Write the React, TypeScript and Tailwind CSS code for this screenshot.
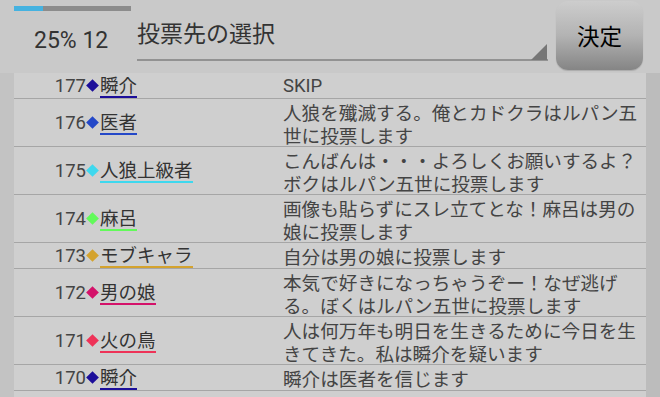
// Vote target selection screen

const rows = [
  { no: 177, name: '瞬介', color: '#1c0e9a', msg: 'SKIP' },
  { no: 176, name: '医者', color: '#2448c8', msg: '人狼を殲滅する。俺とカドクラはルパン五世に投票します' },
  { no: 175, name: '人狼上級者', color: '#3ed8ee', msg: 'こんばんは・・・よろしくお願いするよ？ボクはルパン五世に投票します' },
  { no: 174, name: '麻呂', color: '#62fa5a', msg: '画像も貼らずにスレ立てとな！麻呂は男の娘に投票します' },
  { no: 173, name: 'モブキャラ', color: '#d4a32e', msg: '自分は男の娘に投票します' },
  { no: 172, name: '男の娘', color: '#d4126a', msg: '本気で好きになっちゃうぞー！なぜ逃げる。ぼくはルパン五世に投票します' },
  { no: 171, name: '火の鳥', color: '#ee3358', msg: '人は何万年も明日を生きるために今日を生きてきた。私は瞬介を疑います' },
  { no: 170, name: '瞬介', color: '#1c0e9a', msg: '瞬介は医者を信じます' },
];

export default function App() {
  return (
    <div className="w-[660px] h-[397px] overflow-hidden bg-[#c9c9c9] flex flex-col font-['Roboto','Noto_Sans_CJK_JP',sans-serif]">
      {/* Header */}
      <div className="h-[73px] flex shrink-0">
        <div className="w-[137px] shrink-0 pl-[14px] pt-[6px]">
          <div className="w-[117px] h-[5px] bg-[#8c8c8c] flex">
            <div className="w-[29px] h-full bg-[#45b2e0]" />
          </div>
          <div className="pl-[20px] pt-[15px] text-[23px] leading-[30px] text-[#333]">25% 12</div>
        </div>
        <div className="w-[411px] shrink-0 relative">
          <div className="pt-[16px] text-[23px] leading-[32px] text-[#333] font-['Noto_Sans_CJK_JP',sans-serif]">投票先の選択</div>
          <div className="absolute left-0 right-0 top-[59px] h-[1.5px] bg-[#929292]" />
          <svg className="absolute right-[1px] top-[44px]" width="16" height="16" viewBox="0 0 16 16">
            <polygon points="16,0 16,16 0,16" fill="#767676" />
          </svg>
        </div>
        <button className="ml-[8px] mt-[1px] w-[87px] h-[69px] rounded-[12px] bg-gradient-to-b from-[#cdcdcd] via-[#b3b3b3] to-[#858585] text-black text-[22.5px] font-['Noto_Sans_CJK_JP',sans-serif] shadow-[0_1px_1px_rgba(0,0,0,0.15)]">
          決定
        </button>
      </div>

      {/* Body */}
      <div className="flex flex-1 min-h-0">
        <div className="w-[14px] shrink-0 bg-[#c3c3c3]" />
        <div className="flex-1 bg-[#cfcfcf] overflow-hidden">
          {rows.map((r, i) => (
            <div key={i} className="flex border-b border-[#a6a6a6] pt-[1px]">
              <div className="w-[269px] shrink-0 flex items-center">
                <div className="flex items-baseline text-[18.5px] text-[#444] whitespace-nowrap">
                  <span className="w-[72px] text-right leading-[21px]">{r.no}</span>
                  <span
                    className="self-center w-[9px] h-[9px] rotate-45 mx-[2px] mb-[1px] shrink-0"
                    style={{ backgroundColor: r.color }}
                  />
                  <span
                    className="ml-[1px] leading-[21px] pb-[1px] border-b-2 text-[#333] font-['Noto_Sans_CJK_JP',sans-serif]"
                    style={{ borderColor: r.color }}
                  >
                    {r.name}
                  </span>
                </div>
              </div>
              <div
                className={
                  r.msg === 'SKIP'
                    ? 'w-[358px] shrink-0 text-[18.5px] leading-[23px] pt-[1px] text-[#444]'
                    : "w-[358px] shrink-0 text-[18.6px] leading-[23px] text-[#444] font-['Noto_Sans_CJK_JP',sans-serif]"
                }
              >
                {r.msg}
              </div>
            </div>
          ))}
        </div>
        <div className="w-[14px] shrink-0 bg-[#bcbcbc]" />
      </div>
    </div>
  );
}
